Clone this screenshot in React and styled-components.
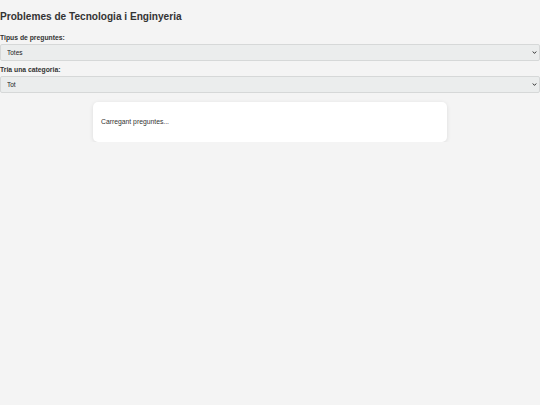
import styled, { createGlobalStyle } from 'styled-components';

const Global = createGlobalStyle`
  html, body {
    margin: 0;
    padding: 0;
    background: #f4f4f4;
    font-family: "Liberation Sans", Arial, sans-serif;
    color: #333;
  }
`;

const Page = styled.div`
  padding: 0;
`;

const Title = styled.h1`
  font-size: 10.1px;
  line-height: 11px;
  font-weight: bold;
  margin: 0;
  padding-top: 11px;
  height: 21px;
  color: #333;
`;

const Field = styled.div`
  display: flex;
  flex-direction: column;
  margin-bottom: 3px;
`;

const Label = styled.label`
  font-size: 6.8px;
  line-height: 9px;
  padding-top: 1px;
  font-weight: bold;
  margin-bottom: 2px;
  color: #333;
`;

const SelectWrap = styled.div`
  position: relative;
  height: 17px;
`;

const Select = styled.select`
  display: block;
  box-sizing: border-box;
  appearance: none;
  -webkit-appearance: none;
  width: 100%;
  height: 17px;
  font-family: "Liberation Sans", Arial, sans-serif;
  font-size: 6.5px;
  padding: 0 6px;
  border: 1px solid #d6d8d8;
  border-radius: 2px;
  background: #ebeded;
  color: #222;
  outline: none;
`;

const Arrow = styled.svg`
  position: absolute;
  right: 3px;
  top: 6px;
  width: 5px;
  height: 5px;
  pointer-events: none;
`;

const Card = styled.div`
  background: #fff;
  width: 354px;
  height: 40px;
  margin: 9px auto 0;
  border-radius: 5px;
  box-shadow: 0 1px 4px rgba(0, 0, 0, 0.1);
  display: flex;
  align-items: center;
  padding: 0 8px 1px;
  box-sizing: border-box;
  font-size: 6.8px;
  color: #333;
`;

function Dropdown({ value, label }) {
  return (
    <SelectWrap>
      <Select defaultValue={value}>
        <option value={value}>{label}</option>
      </Select>
      <Arrow viewBox="0 0 10 10">
        <path d="M1.5 3 L5 6.8 L8.5 3" fill="none" stroke="#333" strokeWidth="2" />
      </Arrow>
    </SelectWrap>
  );
}

function App() {
  return (
    <>
      <Global />
      <Page>
        <Title>Problemes de Tecnologia i Enginyeria</Title>
        <Field>
          <Label>Tipus de preguntes:</Label>
          <Dropdown value="totes" label="Totes" />
        </Field>
        <Field>
          <Label>Tria una categoria:</Label>
          <Dropdown value="tot" label="Tot" />
        </Field>
        <Card>Carregant preguntes...</Card>
      </Page>
    </>
  );
}

export default App;
